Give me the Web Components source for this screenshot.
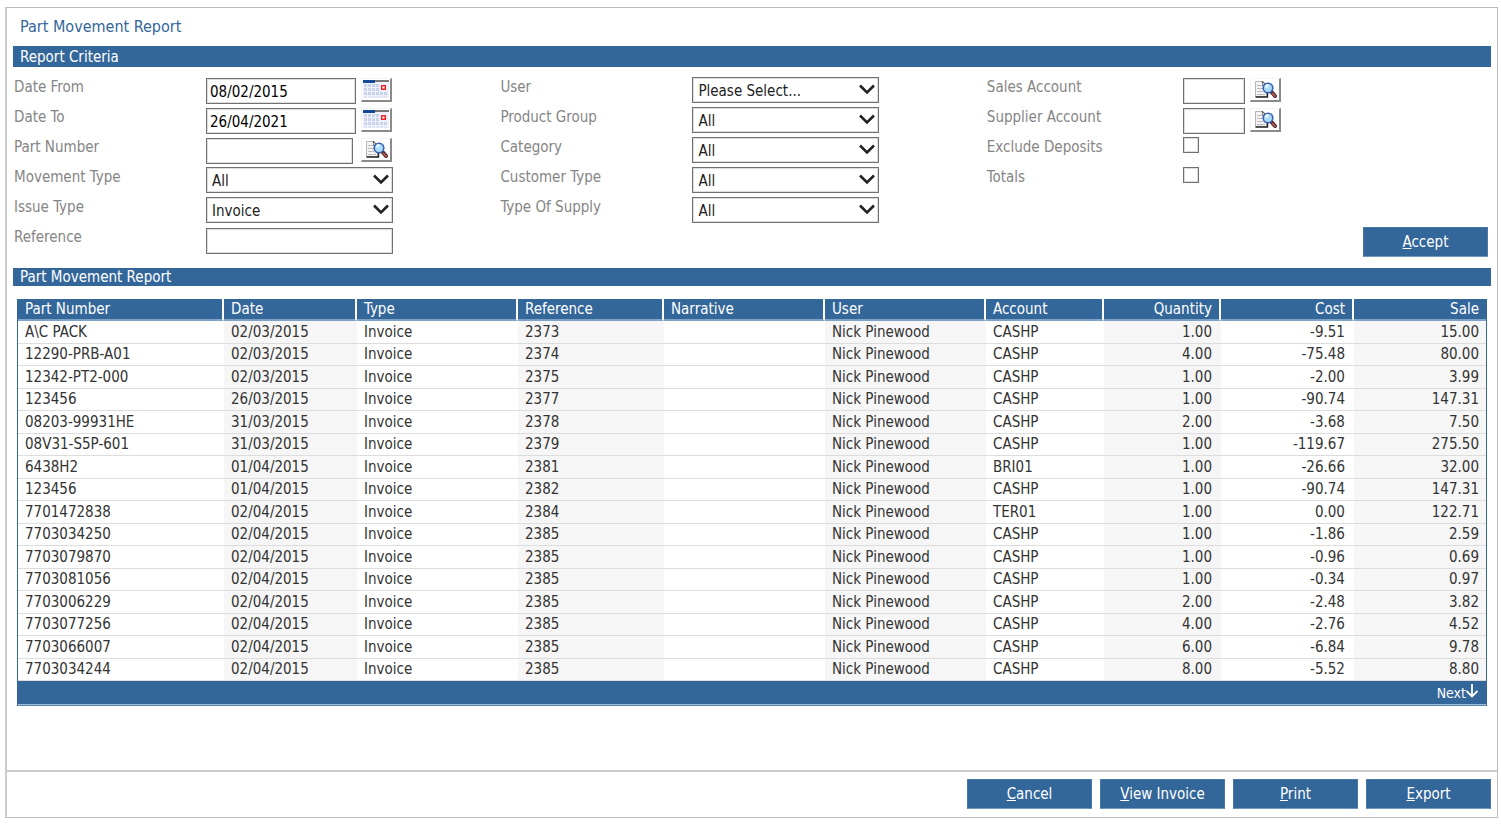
<!DOCTYPE html>
<html lang="en">
<head>
<meta charset="utf-8">
<meta name="viewport" content="width=device-width, initial-scale=1">
<title>Part Movement Report</title>
<style>
  body {
    --blue: #336699;
    margin: 0;
    background: #fff;
    font-family: "DejaVu Sans Condensed", "DejaVu Sans", Tahoma, sans-serif;
    font-size: 15px;
    color: #333;
  }
</style>
</head>
<body>

<report-window heading="Part Movement Report">
  <report-section heading="Report Criteria">
    <criteria-grid>
      <form-field slot="left" label="Date From" size="date" value="08/02/2015" button="calendar"></form-field>
      <form-field slot="left" label="Date To" size="date" value="26/04/2021" button="calendar"></form-field>
      <form-field slot="left" label="Part Number" size="part" button="search"></form-field>
      <form-field slot="left" label="Movement Type" type="select" value="All"></form-field>
      <form-field slot="left" label="Issue Type" type="select" value="Invoice"></form-field>
      <form-field slot="left" label="Reference"></form-field>

      <form-field slot="middle" label="User" type="select" value="Please Select..."></form-field>
      <form-field slot="middle" label="Product Group" type="select" value="All"></form-field>
      <form-field slot="middle" label="Category" type="select" value="All"></form-field>
      <form-field slot="middle" label="Customer Type" type="select" value="All"></form-field>
      <form-field slot="middle" label="Type Of Supply" type="select" value="All"></form-field>

      <form-field slot="right" label="Sales Account" size="account" button="search"></form-field>
      <form-field slot="right" label="Supplier Account" size="account" button="search"></form-field>
      <form-field slot="right" label="Exclude Deposits" type="checkbox"></form-field>
      <form-field slot="right" label="Totals" type="checkbox"></form-field>
      <action-button slot="action"><u>A</u>ccept</action-button>
    </criteria-grid>
  </report-section>

  <report-section heading="Part Movement Report" compact>
    <movement-table></movement-table>
  </report-section>

  <action-button slot="actions"><u>C</u>ancel</action-button>
  <action-button slot="actions"><u>V</u>iew Invoice</action-button>
  <action-button slot="actions"><u>P</u>rint</action-button>
  <action-button slot="actions"><u>E</u>xport</action-button>
</report-window>

<template id="report-window">
  <style>
    :host {
      display: flex;
      flex-direction: column;
      box-sizing: border-box;
      min-height: 100vh;
      padding: 7px 3px 6px 5px;
    }
    .frame {
      flex: 1;
      display: flex;
      flex-direction: column;
      border: 1px solid #bbb;
      border-left: 2px solid #ccc;
    }
    h1 {
      margin: 0;
      padding: 7px 13px 8px;
      font-size: 16px;
      font-weight: normal;
      line-height: 23px;
      color: var(--blue);
    }
    main {
      flex: 1;
      padding: 0 6px;
    }
    footer {
      display: flex;
      justify-content: flex-end;
      gap: 8px;
      padding: 7px 6px 8px;
      border-top: 2px solid #ccc;
    }
  </style>
  <div class="frame">
    <h1></h1>
    <main><slot></slot></main>
    <footer><slot name="actions"></slot></footer>
  </div>
</template>

<template id="report-section">
  <style>
    :host { display: block; }
    h2 {
      margin: 0;
      padding: 2px 7px 0;
      font-size: 15px;
      font-weight: normal;
      line-height: 19px;
      color: #fff;
      background: var(--blue);
    }
    :host([compact]) h2 {
      padding-top: 1px;
      line-height: 17px;
    }
  </style>
  <h2></h2>
  <slot></slot>
</template>

<template id="criteria-grid">
  <style>
    :host {
      display: grid;
      grid-template-columns: 33fr 33fr 34fr;
      padding: 8px 3px 13px 1px;
    }
    .last {
      --label-width: 196px;
      display: flex;
      flex-direction: column;
    }
    .action {
      margin-top: auto;
      align-self: flex-end;
      height: 28px;
    }
  </style>
  <div><slot name="left"></slot></div>
  <div><slot name="middle"></slot></div>
  <div class="last">
    <slot name="right"></slot>
    <div class="action"><slot name="action"></slot></div>
  </div>
</template>

<template id="form-field">
  <style>
    :host {
      display: flex;
      align-items: flex-start;
      height: 30px;
    }
    label {
      flex: none;
      width: var(--label-width, 192px);
      line-height: 24px;
      color: #858585;
    }
    input, select {
      box-sizing: border-box;
      margin: 3px 0 0;
      width: 187px;
      height: 26px;
      padding: 2px 3px 0;
      border: 1px solid #707070;
      border-radius: 0;
      box-shadow: inset 0 0 0 1px #ddd;
      background: #fff;
      font: inherit;
      color: #000;
      appearance: none;
    }
    .select {
      position: relative;
      margin-top: 2px;
    }
    select {
      display: block;
      margin: 0;
      padding: 2px 24px 0 5px;
      color: #222;
    }
    .select svg {
      position: absolute;
      right: 4px;
      top: 7px;
      pointer-events: none;
    }
    input[type=checkbox] {
      margin-top: 2px;
      width: 16px;
      height: 16px;
      padding: 0;
    }
    input[type=checkbox]:checked { background: var(--blue); }
    :host([size=date]) input { width: 150px; }
    :host([size=part]) input { width: 147px; }
    :host([size=account]) input { width: 62px; }
    button {
      box-sizing: border-box;
      margin: 3px 0 0 5px;
      width: 31px;
      height: 24px;
      padding: 0;
      border: solid;
      border-width: 1px 2px 2px 1px;
      border-color: #f4f4f4 #8a8a8a #8a8a8a #f4f4f4;
      background: #fff;
    }
    :host([size=part]) button { margin-left: 8px; }
    button svg { display: block; margin: auto; }
  </style>
  <label for="control"></label>
</template>

<template id="action-button">
  <style>
    :host { display: inline-block; }
    button {
      display: block;
      box-sizing: border-box;
      width: 125px;
      height: 30px;
      padding: 0;
      border: 1px solid #4a78a6;
      border-bottom-color: #7096bb;
      background: var(--blue);
      font: inherit;
      color: #fff;
    }
  </style>
  <button type="button"><slot></slot></button>
</template>

<template id="movement-table">
  <style>
    :host {
      display: block;
      padding: 13px 4px 0;
    }
    table {
      width: 100%;
      table-layout: fixed;
      border-collapse: separate;
      border-spacing: 0;
      border: 1px solid var(--blue);
      border-top: 0;
      border-bottom-color: #5b88b5;
    }
    th, td {
      padding: 0 7px;
      font-weight: normal;
      text-align: left;
      white-space: nowrap;
    }
    th {
      height: 20px;
      line-height: 20px;
      color: #fff;
      background: var(--blue);
      border-right: 2px solid #fff;
      border-bottom: 2px solid #7fa3c6;
    }
    th:last-child { border-right: 0; }
    tbody td {
      line-height: 22px;
      border-bottom: 1px solid #ddd;
    }
    tbody tr:nth-child(even) td { line-height: 21px; }
    tbody td:nth-child(even) { background: #f6f6f6; }
    .num { text-align: right; }
    th.num { padding-right: 7px; }
    td.num { padding-right: 9px; }
    th.num:last-child, td.num:last-child { padding-right: 7px; }
    tfoot td {
      height: 23px;
      padding-right: 8px;
      text-align: right;
      background: var(--blue);
      border-bottom: 1px solid #9dbad5;
    }
    a {
      display: inline-flex;
      align-items: center;
      font-size: 14px;
      line-height: 20px;
      color: #fff;
      text-decoration: none;
    }
    a svg { margin-bottom: 3px; }
  </style>
  <table>
    <colgroup></colgroup>
    <thead><tr></tr></thead>
    <tbody></tbody>
    <tfoot>
      <tr><td colspan="10"><a href="#next">Next<svg width="12" height="14" viewBox="0 0 12 14" fill="none" stroke="#fff" stroke-width="1.800"><path d="M6 0v12M0.500 7l5.500 5.500 5.500-5.500"/></svg></a></td></tr>
    </tfoot>
  </table>
</template>

<script>
const clone = (id) => document.getElementById(id).content.cloneNode(true);

const icons = {
  calendar: `
    <svg width="26" height="19" viewBox="0 0 26 19">
      <path fill="#eef1fa" d="M0 1h26v17H0z"/>
      <path fill="#c9d3ea" d="M1 4h3v3H1zM5 4h3v3H5zM9 4h3v3H9zM13 4h3v3h-3zM1 8h3v3H1zM5 8h3v3H5zM9 8h3v3H9zM13 8h3v3h-3zM17 12h3v3h-3zM21 12h3v3h-3zM1 12h3v3H1zM5 12h3v3H5zM9 12h3v3H9zM13 12h3v3h-3z"/>
      <path fill="#dfe5f3" d="M1 16h3v2H1zM5 16h3v2H5zM9 16h3v2H9zM13 16h3v2h-3zM17 16h3v2h-3zM21 16h3v2h-3z"/>
      <path fill="#164a96" d="M0 0h12v3H0z"/>
      <path fill="#777" d="M12 0h14v2H12z"/>
      <path fill="#fff" stroke="#ee2530" stroke-width="1.5" d="M18.7 5.7h3.6v3.6h-3.6z"/>
    </svg>`,
  search: `
    <svg width="26" height="19" viewBox="-2 0 26 19">
      <path fill="#f4f4f4" stroke="#b5b5b5" d="M1.5 1.5h7l4 4v11h-11z"/>
      <path fill="none" stroke="#222" stroke-width="1.4" d="M8 1.5l5 4.5M1.5 17h12v-4"/>
      <path fill="#ddd" stroke="#555" stroke-width=".7" d="M8.5 1.5v4h4z"/>
      <path stroke="#bbb" d="M3 5.5h5M3 8.5h6M3 11.5h6M3 14.5h8"/>
      <path stroke="#402030" stroke-width="4" stroke-linecap="round" d="M18 12.5l3 3.5"/>
      <path stroke="#b25a4a" stroke-width="2" stroke-linecap="round" d="M18.5 13.5l2.5 2.5"/>
      <circle cx="14" cy="8" r="4.8" fill="#a9dcf8" stroke="#3c5fae" stroke-width="1.6"/>
      <path fill="#e4f7ff" d="M11 7a3 3 0 0 1 3-3l1 2-2 2z"/>
    </svg>`
};

class ReportWindow extends HTMLElement {
  constructor() {
    super();
    this.attachShadow({ mode: 'open' });
    this.shadowRoot.appendChild(clone('report-window'));
    this.shadowRoot.querySelector('h1').textContent = this.getAttribute('heading');
  }
}

class ReportSection extends HTMLElement {
  constructor() {
    super();
    this.attachShadow({ mode: 'open' });
    this.shadowRoot.appendChild(clone('report-section'));
    this.shadowRoot.querySelector('h2').textContent = this.getAttribute('heading');
  }
}

class CriteriaGrid extends HTMLElement {
  constructor() {
    super();
    this.attachShadow({ mode: 'open' });
    this.shadowRoot.appendChild(clone('criteria-grid'));
  }
}

class ActionButton extends HTMLElement {
  constructor() {
    super();
    this.attachShadow({ mode: 'open' });
    this.shadowRoot.appendChild(clone('action-button'));
  }
}

// label + text box, drop-down or tick box, with an optional picker button
class FormField extends HTMLElement {
  constructor() {
    super();
    this.attachShadow({ mode: 'open' });
    this.shadowRoot.appendChild(clone('form-field'));

    const label = this.getAttribute('label');
    this.shadowRoot.querySelector('label').textContent = label;
    this.shadowRoot.appendChild(this.createControl());

    const kind = this.getAttribute('button');
    if (kind) {
      const button = document.createElement('button');
      button.type = 'button';
      button.setAttribute('aria-label', `${label} ${kind}`);
      button.innerHTML = icons[kind];
      this.shadowRoot.appendChild(button);
    }
  }

  createControl() {
    const type = this.getAttribute('type') || 'text';
    const value = this.getAttribute('value') || '';

    if (type === 'select') {
      const box = document.createElement('div');
      box.className = 'select';
      box.innerHTML = `
        <select id="control"><option>${value}</option></select>
        <svg width="16" height="11" viewBox="0 0 16 11" fill="none" stroke="#222" stroke-width="2.6"><path d="M1 1.5l7 7 7-7"/></svg>`;
      return box;
    }

    const input = document.createElement('input');
    input.id = 'control';
    input.type = type;
    if (type === 'text') input.value = value;
    return input;
  }
}

const columns = [
  { name: 'Part Number', width: 206 },
  { name: 'Date', width: 133 },
  { name: 'Type', width: 161 },
  { name: 'Reference', width: 146 },
  { name: 'Narrative', width: 161 },
  { name: 'User', width: 161 },
  { name: 'Account', width: 118 },
  { name: 'Quantity', width: 117, numeric: true },
  { name: 'Cost', width: 133, numeric: true },
  { name: 'Sale', width: 132, numeric: true }
];

// part, date, reference, account, quantity, cost, sale
const movements = [
  ['A\\C PACK', '02/03/2015', '2373', 'CASHP', '1.00', '-9.51', '15.00'],
  ['12290-PRB-A01', '02/03/2015', '2374', 'CASHP', '4.00', '-75.48', '80.00'],
  ['12342-PT2-000', '02/03/2015', '2375', 'CASHP', '1.00', '-2.00', '3.99'],
  ['123456', '26/03/2015', '2377', 'CASHP', '1.00', '-90.74', '147.31'],
  ['08203-99931HE', '31/03/2015', '2378', 'CASHP', '2.00', '-3.68', '7.50'],
  ['08V31-S5P-601', '31/03/2015', '2379', 'CASHP', '1.00', '-119.67', '275.50'],
  ['6438H2', '01/04/2015', '2381', 'BRI01', '1.00', '-26.66', '32.00'],
  ['123456', '01/04/2015', '2382', 'CASHP', '1.00', '-90.74', '147.31'],
  ['7701472838', '02/04/2015', '2384', 'TER01', '1.00', '0.00', '122.71'],
  ['7703034250', '02/04/2015', '2385', 'CASHP', '1.00', '-1.86', '2.59'],
  ['7703079870', '02/04/2015', '2385', 'CASHP', '1.00', '-0.96', '0.69'],
  ['7703081056', '02/04/2015', '2385', 'CASHP', '1.00', '-0.34', '0.97'],
  ['7703006229', '02/04/2015', '2385', 'CASHP', '2.00', '-2.48', '3.82'],
  ['7703077256', '02/04/2015', '2385', 'CASHP', '4.00', '-2.76', '4.52'],
  ['7703066007', '02/04/2015', '2385', 'CASHP', '6.00', '-6.84', '9.78'],
  ['7703034244', '02/04/2015', '2385', 'CASHP', '8.00', '-5.52', '8.80']
];

class MovementTable extends HTMLElement {
  constructor() {
    super();
    this.attachShadow({ mode: 'open' });
    this.shadowRoot.appendChild(clone('movement-table'));

    const total = columns.reduce((sum, col) => sum + col.width, 0);
    const numClass = (i) => columns[i].numeric ? ' class="num"' : '';

    this.shadowRoot.querySelector('colgroup').innerHTML = columns
      .map((col) => `<col style="width: ${col.width / total * 100}%">`).join('');
    this.shadowRoot.querySelector('thead tr').innerHTML = columns
      .map((col, i) => `<th scope="col"${numClass(i)}>${col.name}</th>`).join('');
    this.shadowRoot.querySelector('tbody').innerHTML = movements
      .map(([part, date, ref, account, qty, cost, sale]) => {
        const cells = [part, date, 'Invoice', ref, '', 'Nick Pinewood', account, qty, cost, sale];
        return `<tr>${cells.map((text, i) => `<td${numClass(i)}>${text}</td>`).join('')}</tr>`;
      }).join('');
  }
}

window.customElements.define('report-window', ReportWindow);
window.customElements.define('report-section', ReportSection);
window.customElements.define('criteria-grid', CriteriaGrid);
window.customElements.define('action-button', ActionButton);
window.customElements.define('form-field', FormField);
window.customElements.define('movement-table', MovementTable);
</script>
</body>
</html>
